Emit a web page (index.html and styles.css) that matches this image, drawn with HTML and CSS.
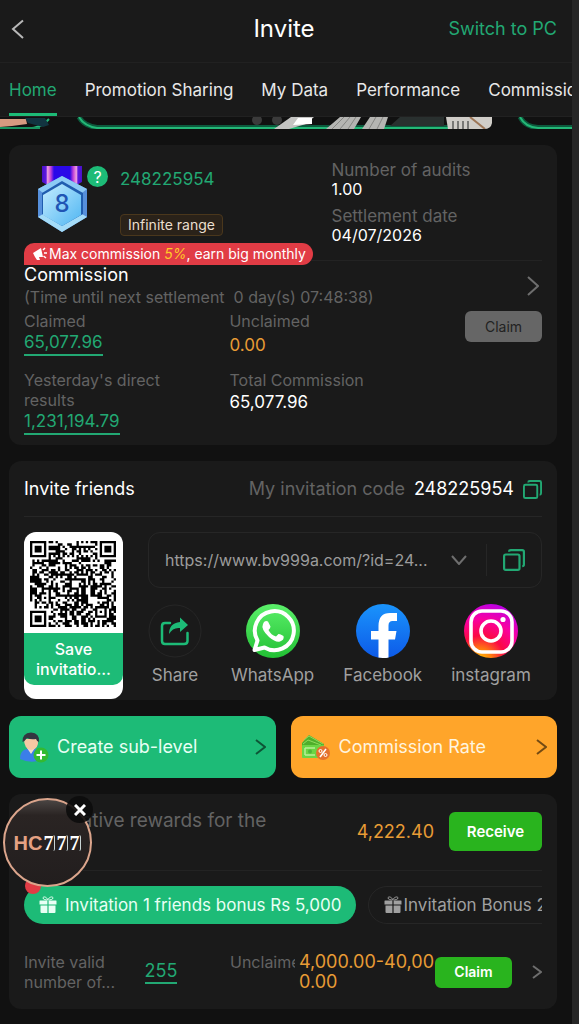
FILE: index.html
```html
<!DOCTYPE html>
<html lang="en">
<head>
    <meta charset="UTF-8">
    <meta name="viewport" content="width=device-width, initial-scale=1.0">
    <title>Invite</title>
    <link rel="stylesheet" href="styles.css">
</head>
<body>
    <svg class="defs" width="0" height="0" aria-hidden="true">
        <defs>
            <linearGradient id="ribbon">
                <stop offset="0" stop-color="#4a10c8"/><stop offset=".1" stop-color="#5a18e0"/>
                <stop offset=".14" stop-color="#f0a0e0"/><stop offset=".22" stop-color="#c040d8"/>
                <stop offset=".3" stop-color="#2a08e8"/><stop offset=".7" stop-color="#2a08e8"/>
                <stop offset=".78" stop-color="#c040d8"/><stop offset=".86" stop-color="#f0a0e0"/>
                <stop offset=".9" stop-color="#5a18e0"/><stop offset="1" stop-color="#4a10c8"/>
            </linearGradient>
            <linearGradient id="gem" x1="0" y1="0" x2="1" y2="1"><stop offset="0" stop-color="#c4ecff"/><stop offset="1" stop-color="#4fb6f2"/></linearGradient>
            <linearGradient id="waBg" x1="0" y1="0" x2="0" y2="1"><stop offset="0" stop-color="#5bf06a"/><stop offset="1" stop-color="#22c034"/></linearGradient>
            <linearGradient id="fbBg" x1="0" y1="0" x2="0" y2="1"><stop offset="0" stop-color="#1a94fc"/><stop offset="1" stop-color="#0d5ae8"/></linearGradient>
            <radialGradient id="igBg" cx=".3" cy="1.05" r="1.1">
                <stop offset="0" stop-color="#ffc800"/><stop offset=".2" stop-color="#ff7a10"/>
                <stop offset=".42" stop-color="#fb0a44"/><stop offset=".7" stop-color="#fa00a0"/><stop offset="1" stop-color="#b800e8"/>
            </radialGradient>
            <symbol id="copy" viewBox="0 0 20 20">
                <rect x="1" y="5" width="14" height="14" rx="1.5"/>
                <path d="M5.5 2.5Q5.500 1 7 1H17.500Q19 1 19 2.500V14Q19 15.500 17.500 15.500"/>
            </symbol>
            <symbol id="gift" viewBox="0 0 18 18">
                <path d="M1 4.500H8.400V8.500H.500V5Q.500 4.500 1 4.500ZM9.600 4.500H17Q17.500 4.500 17.500 5V8.500H9.600ZM1.500 9.500H8.400V17H2.500Q1.500 17 1.500 16ZM9.600 9.500H16.500V16Q16.500 17 15.500 17H9.600Z" fill="currentColor"/>
                <path d="M8.500 4C7 4 4 3.500 4 2C4 .300 7.500 .500 8.800 3.800C10.500 .500 14 .300 14 2C14 3.500 11 4 9.500 4" fill="none" stroke="currentColor"/>
            </symbol>
        </defs>
    </svg>

    <div class="app">
        <header class="topbar">
            <a class="back" href="#" aria-label="Back"><svg width="14" height="22" viewBox="0 0 14 22"><path d="M12 2.500L2 11L12 20"/></svg></a>
            <h1>Invite</h1>
            <a class="switch" href="#">Switch to PC</a>
        </header>
        <nav class="tabs">
            <a class="active" href="#">Home</a>
            <a href="#">Promotion Sharing</a>
            <a href="#">My Data</a>
            <a href="#">Performance</a>
            <a href="#">Commission</a>
        </nav>
        <div class="banners">
            <svg class="banner-art" viewBox="0 0 572 12" preserveAspectRatio="none" aria-hidden="true">
                <path d="M28 11.500C37 11.500 43 9 49 2" fill="none" stroke="#22b97a" stroke-width="2"/>
                <path d="M0 2L26 2L27 7L12 9L0 10Z" fill="#d79a80"/>
                <path d="M25 1H45L49 8L43 10L28 6Z" fill="#123440"/>
                <path d="M0 11H40" stroke="#18935f" stroke-width="2"/>
                <path d="M79 0Q84 9 97 10.500H474" fill="none" stroke="#0c5a3d" stroke-width="5"/>
                <path d="M79 0Q84 9 97 11H474" fill="none" stroke="#24b877" stroke-width="2"/>
                <circle cx="257" cy="3" r="5" fill="#3b3b3b"/><circle cx="277" cy="3" r="5" fill="#3b3b3b"/>
                <path d="M274 12L291 0H314L306 7L289 12Z" fill="#c4c4c2"/>
                <path d="M293 8L298 1H312V7Z" fill="#fff"/>
                <path d="M326 12L340 0H361L354 12ZM362 12L370 0H388L384 12Z" fill="#b5b5b2"/>
                <path d="M332 12L344 0M340 12L350 0M348 12L356 0M369 12L376 0M377 12L383 0" stroke="#858582"/>
                <path d="M400 0H444V9H390Z" fill="#29302f"/>
                <path d="M446 0H492V6Q491 12 484 12H448Z" fill="#d0cdc8"/>
                <path d="M453 4V12M458 4V12M463 4V12M468 4V12" stroke="#787875" stroke-width="2"/>
                <path d="M470 0L485 12" stroke="#9d7657" stroke-width="2"/>
                <path d="M520 0Q525 10 538 10.500H572" fill="none" stroke="#0c5a3d" stroke-width="5"/>
                <path d="M520 0Q525 10 538 11H572" fill="none" stroke="#24b877" stroke-width="2"/>
            </svg>
        </div>

        <main>
            <section class="card account">
                <div class="profile">
                    <div class="medal">
                        <svg width="52" height="68" viewBox="0 0 52 68" role="img" aria-label="Level 8">
                            <path d="M5 1H45V17L25 28L5 17Z" fill="url(#ribbon)"/>
                            <path d="M25 11L50 24V52L25 67L1 52V24Z" fill="#5690dc"/>
                            <path d="M25 11L50 24L45 28L25 17L6 28L1 24Z" fill="#8ccaf5"/>
                            <path d="M1 52L6 49L25 60L45 49L50 52L25 67Z" fill="#a4dcf8"/>
                            <path d="M25 16L46 28V49L25 61L5 49V28Z" fill="#205daf"/>
                            <path d="M25 19L44 30V50L25 61L6 50V30Z" fill="url(#gem)"/>
                            <text x="25" y="47" text-anchor="middle">8</text>
                        </svg>
                        <button class="help" aria-label="Help">?</button>
                    </div>
                    <div class="member">
                        <div class="member-id">248225954</div>
                        <span class="range">Infinite range</span>
                    </div>
                    <dl class="audit">
                        <dt>Number of audits</dt>
                        <dd>1.00</dd>
                        <dt>Settlement date</dt>
                        <dd>04/07/2026</dd>
                    </dl>
                    <div class="promo">
                        <svg width="15" height="14" viewBox="0 0 15 14" aria-hidden="true">
                            <path d="M1 6L9 1L11 10L3 10ZM3 10L7 10L8 13H5Z" fill="#fff"/>
                            <path d="M11 3L13 1M12 6H15M11.500 9L14 11" stroke="#fff" stroke-width="1.500"/>
                        </svg>
                        <span>Max commission <em>5%</em>, earn big monthly</span>
                    </div>
                </div>

                <div class="commission-head">
                    <div>
                        <h2>Commission</h2>
                        <p>(Time until next settlement&nbsp; 0 day(s) 07:48:38)</p>
                    </div>
                    <a href="#" aria-label="Commission details"><svg class="chevron" width="12" height="20" viewBox="0 0 12 20"><path d="M1 1L11 10L1 19"/></svg></a>
                </div>
                <div class="stats">
                    <div class="stat">
                        <span>Claimed</span>
                        <a href="#">65,077.96</a>
                    </div>
                    <div class="stat">
                        <span>Unclaimed</span>
                        <b class="gold">0.00</b>
                    </div>
                    <button class="claim" disabled>Claim</button>
                    <div class="stat">
                        <span>Yesterday's direct results</span>
                        <a href="#">1,231,194.79</a>
                    </div>
                    <div class="stat">
                        <span>Total Commission</span>
                        <b>65,077.96</b>
                    </div>
                </div>
            </section>

            <section class="card friends">
                <div class="friends-head">
                    <h2>Invite friends</h2>
                    <div class="code">
                        <span>My invitation code</span>
                        <b>248225954</b>
                        <button class="icon-btn" aria-label="Copy code"><svg class="copy" width="19" height="19"><use href="#copy"/></svg></button>
                    </div>
                </div>
                <div class="friends-body">
                    <div class="qr-card">
                        <svg id="qr" viewBox="0 0 37 37" role="img" aria-label="Invitation QR code"><path d=""/></svg>
                        <button class="save">Save invitatio...</button>
                    </div>
                    <div class="share-panel">
                        <div class="link-box">
                            <select aria-label="Invitation link">
                                <option>https://www.bv999a.com/?id=24...</option>
                            </select>
                            <svg class="chevron" width="16" height="10" viewBox="0 0 16 10" aria-hidden="true"><path d="M1 1L8 9L15 1"/></svg>
                            <button class="icon-btn" aria-label="Copy link"><svg class="copy" width="22" height="22"><use href="#copy"/></svg></button>
                        </div>
                        <div class="socials">
                            <a href="#">
                                <svg width="54" height="54" viewBox="0 0 54 54">
                                    <circle cx="27" cy="27" r="26" fill="none" stroke="#262626"/>
                                    <path d="M22 19H17Q14 19 14 22V37Q14 40 17 40H36Q39.500 40 39.500 37V29" fill="none" stroke="#1dbb77" stroke-width="2.500" stroke-linecap="round"/>
                                    <path d="M32 13.500L40 21L32 28V24Q25 23 21 30Q21 19 32 18Z" fill="#1dbb77"/>
                                </svg>
                                Share
                            </a>
                            <a href="#">
                                <svg width="54" height="54" viewBox="0 0 54 54">
                                    <circle cx="27" cy="27" r="27" fill="url(#waBg)"/>
                                    <path d="M8.500 46L11.500 36.500A19.500 19.500 0 1 1 18.500 43.500Z" fill="none" stroke="#fff" stroke-width="4" stroke-linejoin="round"/>
                                    <path d="M18 18Q20 16.500 22 17.500L24.500 22.500Q24.500 24 22.500 26Q25 31 30 32.500L32.500 30Q33.500 29.500 37.500 32Q38.500 36 34 37.500Q30 39 23 33Q14.500 25 17 20Z" fill="#fff"/>
                                </svg>
                                WhatsApp
                            </a>
                            <a href="#">
                                <svg width="54" height="54" viewBox="0 0 54 54">
                                    <circle cx="27" cy="27" r="27" fill="url(#fbBg)"/>
                                    <path d="M22.500 53.600V35.500H15V27H22.500V22Q22.500 9 34 9H41V17H36.500Q32.500 17 32.500 21.500V27H40.500L39 35.500H32.500V53.400Q28 54.500 22.500 53.600Z" fill="#fff"/>
                                </svg>
                                Facebook
                            </a>
                            <a href="#">
                                <svg width="54" height="54" viewBox="0 0 54 54">
                                    <circle cx="27" cy="27" r="27" fill="url(#igBg)"/>
                                    <g fill="none" stroke="#fff" stroke-width="3.600">
                                        <rect x="7" y="7" width="41" height="41" rx="11"/>
                                        <circle cx="27" cy="27" r="10"/>
                                    </g>
                                    <circle cx="39" cy="15.500" r="2.600" fill="#fff"/>
                                </svg>
                                instagram
                            </a>
                        </div>
                    </div>
                </div>
            </section>

            <div class="actions">
                <button class="action green">
                    <svg width="30" height="32" viewBox="0 0 30 32" aria-hidden="true">
                        <path d="M1 28Q1 19 8 18H17Q24 19 22 29Q12 33 1 28Z" fill="#3b7ee8"/>
                        <path d="M8 17H16L12 23Z" fill="#f1dccd"/>
                        <path d="M5 8H19Q20 19 12 19Q5 18 5 8Z" fill="#f6c8a4"/>
                        <path d="M3.500 11Q3 2 12 1.500Q21 2 20 11Q18 11 17 8Q12 9 8 7Q6 10 3.500 11Z" fill="#333540"/>
                        <circle cx="22" cy="24" r="7.500" fill="#33ba31"/>
                        <path d="M22 19.500V28.500M17.500 24H26.500" stroke="#fff" stroke-width="2"/>
                    </svg>
                    <span>Create sub-level</span>
                    <svg class="chevron" width="11" height="16" viewBox="0 0 11 16"><path d="M1 1L10 8L1 15"/></svg>
                </button>
                <button class="action orange">
                    <svg width="30" height="32" viewBox="0 0 30 32" aria-hidden="true">
                        <path d="M1 12L8 4L23 13L21 20H1Z" fill="#4fae2b"/>
                        <path d="M3 9L8 5L22 13M2 13L7 9L20 14" stroke="#8fdb5c" fill="none"/>
                        <rect x="1" y="14" width="22" height="13" rx="1" fill="#6bd544"/>
                        <path d="M4 17H14M4 24H14M4 17V24" stroke="#b9ee98" stroke-width="1.500" fill="none"/>
                        <circle cx="9" cy="20.500" r="2" fill="#4db53a"/>
                        <circle cx="22" cy="22" r="7" fill="#e5702b"/>
                        <path d="M25 18L19 26" stroke="#fff" stroke-width="1.500"/>
                        <circle cx="19.500" cy="20" r="1.500" fill="none" stroke="#fff"/><circle cx="24.500" cy="24" r="1.500" fill="none" stroke="#fff"/>
                    </svg>
                    <span>Commission Rate</span>
                    <svg class="chevron" width="11" height="16" viewBox="0 0 11 16"><path d="M1 1L10 8L1 15"/></svg>
                </button>
            </div>

            <section class="card rewards">
                <div class="rewards-head">
                    <h2>Cumulative rewards for the</h2>
                    <b class="gold">4,222.40</b>
                    <button class="receive">Receive</button>
                </div>
                <div class="bonus-tabs">
                    <button class="bonus active"><svg width="18" height="18"><use href="#gift"/></svg>Invitation 1 friends bonus Rs 5,000</button>
                    <button class="bonus"><svg width="18" height="18"><use href="#gift"/></svg>Invitation Bonus 2</button>
                </div>
                <div class="bonus-row">
                    <span class="valid">Invite valid number of...</span>
                    <a class="count" href="#">255</a>
                    <span class="unclaimed">Unclaimed</span>
                    <b class="gold">4,000.00-40,000.00</b>
                    <button class="claim live">Claim</button>
                    <a class="more" href="#" aria-label="Bonus details"><svg class="chevron" width="10" height="14" viewBox="0 0 10 14"><path d="M1 1L9 7L1 13"/></svg></a>
                </div>
                <i class="dot"></i>
                <div class="floating">
                    <a href="#"><span class="hc">HC</span><span class="reel">7</span><span class="reel">7</span><span class="reel">7</span></a>
                    <button aria-label="Close"><svg width="12" height="12" viewBox="0 0 12 12"><path d="M1 1L11 11M11 1L1 11"/></svg></button>
                </div>
            </section>
        </main>
    </div>
    <script src="qr.js"></script>
</body>
</html>
```
FILE: styles.css
```css
* {
    box-sizing: border-box;
}
body {
    margin: 0;
    background-color: #262626;
    color: #ffffff;
    font-family: Inter, "Liberation Sans", sans-serif;
    font-size: 16px;
    line-height: 20px;
}
h1, h2, p, dl, dd {
    margin: 0;
    font-weight: 400;
}
b {
    font-weight: 400;
}
a {
    color: inherit;
    text-decoration: none;
}
button, select {
    padding: 0;
    border: none;
    background: none;
    color: inherit;
    font: inherit;
    cursor: pointer;
}
svg {
    display: block;
    flex: none;
}
.defs {
    position: absolute;
}
.app {
    min-height: 100vh;
    margin-right: 7px;
    padding-bottom: 15px;
    background-color: #111111;
    overflow: hidden;
}
.gold {
    color: #e89c35;
}
.chevron {
    fill: none;
    stroke: #6e6e6e;
    stroke-width: 2;
}

/* header */
.topbar {
    display: grid;
    grid-template-columns: 1fr auto 1fr;
    align-items: center;
    height: 63px;
    padding: 0 15px 4px 11px;
    background-color: #1a1a1a;
    border-bottom: 1px solid #212121;
}
.back svg {
    fill: none;
    stroke: #b8b8b8;
    stroke-width: 2;
}
.topbar h1 {
    font-size: 24px;
    line-height: 30px;
}
.switch {
    justify-self: end;
    color: #22a873;
    font-size: 18px;
}
.tabs {
    display: flex;
    gap: 28px;
    height: 54px;
    padding-left: 9px;
    background-color: #1a1a1a;
    border-bottom: 1px solid #212121;
    overflow: hidden;
    white-space: nowrap;
}
.tabs a {
    padding-top: 17px;
    font-size: 17px;
    color: #e8e8e8;
}
.tabs .active {
    color: #22a873;
    border-bottom: 3px solid #1dbb77;
}
.banner-art {
    width: 100%;
    height: 12px;
}

main {
    display: flex;
    flex-direction: column;
    gap: 16px;
    padding: 16px 15px 0 9px;
}
.card {
    position: relative;
    padding: 15px;
    background-color: #1a1a1a;
    border-radius: 12px;
}

/* account */
.account {
    padding-bottom: 10px;
}
.profile {
    position: relative;
    display: grid;
    grid-template-columns: 96px 211fr 210fr;
    height: 101px;
    border-bottom: 1px solid #232323;
}
.medal {
    display: flex;
    align-items: flex-start;
    padding: 5px 0 0 13px;
}
.medal text {
    fill: #2055b4;
    font-size: 24px;
    font-weight: 500;
}
.help {
    flex: none;
    width: 21px;
    height: 21px;
    margin: 1px 0 0 -2px;
    border-radius: 50%;
    background-color: #1dbb77;
    font-size: 16px;
}
.member {
    display: flex;
    flex-direction: column;
    align-items: flex-start;
    gap: 25px;
    padding-top: 9px;
}
.member-id {
    color: #22a873;
    font-size: 17px;
}
.range {
    padding: 0 7px;
    border: 1px solid #4a371c;
    border-radius: 4px;
    background-color: #2a2219;
    font-size: 14px;
    color: #eadfce;
}
.audit dt {
    font-size: 17px;
    color: #636363;
}
.audit dd {
    height: 26px;
    line-height: 18px;
}
.promo {
    position: absolute;
    left: 0;
    bottom: -5px;
    display: flex;
    align-items: center;
    gap: 2px;
    height: 22px;
    padding: 0 7px 0 8px;
    border-radius: 10px 11px 11px 0;
    background-color: #e13c45;
    font-size: 14px;
    white-space: nowrap;
}
.promo em {
    color: #ffc928;
}
.commission-head {
    display: flex;
    justify-content: space-between;
    align-items: center;
    padding: 4px 3px 4px 0;
}
.commission-head h2 {
    font-size: 18px;
}
.commission-head p {
    padding-top: 2px;
    font-size: 16px;
    color: #636363;
}
.stats {
    display: grid;
    grid-template-columns: 205fr 235fr 77px;
    row-gap: 14px;
}
.stat {
    display: flex;
    flex-direction: column;
    align-items: flex-start;
    padding-right: 40px;
    color: #636363;
}
.stat a {
    border-bottom: 2px solid #22a873;
    color: #22a873;
    font-size: 17px;
    line-height: 23px;
}
.stat b {
    padding-top: 2px;
    font-size: 17px;
    color: #ffffff;
}
.stat .gold {
    padding-top: 4px;
    color: #e89c35;
}
.claim {
    width: 77px;
    height: 31px;
    border-radius: 6px;
    font-size: 14px;
}
.claim:disabled {
    background-color: #666666;
    color: #222222;
}

/* invite friends */
.friends {
    padding-bottom: 1px;
}
.friends-head {
    display: flex;
    justify-content: space-between;
    align-items: center;
    height: 41px;
    padding-bottom: 14px;
    border-bottom: 1px solid #262626;
}
.friends-head h2 {
    font-size: 18px;
}
.code {
    display: flex;
    align-items: center;
    gap: 9px;
    font-size: 18px;
}
.code span {
    color: #636363;
}
.copy {
    fill: none;
    stroke: #22a873;
    stroke-width: 2;
}
.friends-body {
    display: flex;
    gap: 25px;
    padding-top: 15px;
}
.qr-card {
    flex: none;
    width: 99px;
    height: 167px;
    border-radius: 12px;
    background-color: #ffffff;
}
#qr {
    width: 86px;
    height: 86px;
    margin: 9px 6px 6px;
}
.save {
    width: 100%;
    height: 52px;
    border-radius: 0 0 10px 10px;
    background-color: #1dbb77;
    font-weight: 500;
}
.share-panel {
    flex: 1;
    min-width: 0;
}
.link-box {
    display: flex;
    align-items: center;
    height: 56px;
    padding: 0 16px;
    border: 1px solid #262626;
    border-radius: 12px;
}
.link-box select {
    appearance: none;
    flex: 1;
    min-width: 0;
    color: #9c9c9c;
    font-size: 16px;
}
.link-box .chevron {
    margin: 0 19px 0 4px;
}
.link-box .icon-btn {
    padding: 5px 0 5px 16px;
    border-left: 1px solid #262626;
}
.socials {
    display: flex;
    gap: 29px;
    padding-top: 16px;
}
.socials a {
    display: flex;
    flex-direction: column;
    align-items: center;
    gap: 7px;
    color: #a0a0a0;
    font-size: 17px;
}

.actions {
    display: grid;
    grid-template-columns: 1fr 1fr;
    gap: 15px;
}
.action {
    display: flex;
    align-items: center;
    gap: 8px;
    height: 62px;
    padding: 0 10px;
    border-radius: 12px;
    font-size: 18px;
    color: #e8fff4;
}
.action span {
    flex: 1;
    text-align: left;
}
.action .chevron {
    stroke: rgba(0, 0, 0, 0.55);
}
.green {
    background-color: #1dbb77;
}
.orange {
    background-color: #ffa52a;
    color: #fff4df;
}

/* rewards */
.rewards-head {
    display: flex;
    align-items: center;
    height: 62px;
    border-bottom: 1px solid #232323;
    padding-bottom: 16px;
    font-size: 18px;
}
.rewards-head h2 {
    flex: 1;
    padding-bottom: 22px;
    font-size: 19px;
    color: #636363;
}
.receive {
    width: 93px;
    height: 39px;
    margin-left: 15px;
    border-radius: 6px;
    background-color: #29b41e;
    font-size: 15px;
    font-weight: 600;
}
.bonus-tabs {
    display: flex;
    gap: 12px;
    padding-top: 15px;
    overflow: hidden;
}
.bonus {
    display: flex;
    flex: none;
    align-items: center;
    gap: 1px;
    height: 38px;
    padding: 0 15px;
    border: 1px solid #262626;
    border-radius: 19px;
    font-size: 17px;
    color: #a0a0a0;
}
.bonus.active {
    gap: 8px;
    border: none;
    background-color: #1dbb77;
    color: #e8fff4;
}
.bonus-row {
    display: grid;
    grid-template-columns: 120fr 85fr 65px 140px 78px 29px;
    align-items: center;
    padding: 28px 0 2px;
}
.bonus-row .valid {
    color: #636363;
}
.count {
    justify-self: start;
    border-bottom: 2px solid #22a873;
    color: #22a873;
    font-size: 18px;
    line-height: 22px;
}
.unclaimed {
    align-self: start;
    overflow: hidden;
    color: #636363;
}
.bonus-row .gold {
    padding-left: 4px;
    font-size: 18px;
    word-break: break-all;
}
.more {
    justify-self: end;
}
.live {
    background-color: #29b41e;
    font-weight: 600;
}
.dot {
    position: absolute;
    left: 16px;
    top: 84px;
    width: 16px;
    height: 16px;
    border-radius: 50%;
    background-color: #e13c45;
}
.floating {
    position: absolute;
    left: -6px;
    top: 4px;
}
.floating a {
    display: flex;
    justify-content: center;
    align-items: center;
    width: 89px;
    height: 89px;
    border: 2px solid #dba58c;
    border-radius: 50%;
    background: linear-gradient(#4a4543, #2a2423 18%, #221e1e);
}
.hc {
    color: #e4a183;
    font-family: "Liberation Sans", sans-serif;
    font-size: 20px;
    font-weight: 700;
}
.reel {
    padding: 0 1px;
    border-right: 1px solid #c8d4d4;
    border-radius: 2px;
    font-family: "Liberation Serif", serif;
    font-size: 20px;
    font-weight: 700;
    line-height: 16px;
}
.floating button {
    position: absolute;
    left: 63px;
    top: -2px;
    display: grid;
    place-items: center;
    width: 27px;
    height: 27px;
    border-radius: 50%;
    background-color: rgba(12, 12, 12, 0.9);
}
.floating button path {
    stroke: #ffffff;
    stroke-width: 3;
}
```
FILE: qr.js
```js
const SIZE = 37;

function ring(x, y, cx, cy, radius) {
    const d = Math.max(Math.abs(x - cx), Math.abs(y - cy));
    return d > radius ? null : d;
}

function isDark(x, y, noise) {
    for (const [cx, cy] of [[3, 3], [SIZE - 4, 3], [3, SIZE - 4]]) {
        const d = ring(x, y, cx, cy, 4);
        if (d !== null) return d < 2 || d === 3;
    }
    const d = ring(x, y, SIZE - 7, SIZE - 7, 2);
    if (d !== null) return d !== 1;
    if (x === 6) return y % 2 === 0;
    if (y === 6) return x % 2 === 0;
    return noise > 0.45;
}

let seed = 24822;
let path = "";
for (let y = 0; y < SIZE; y++) {
    for (let x = 0; x < SIZE; x++) {
        seed = (seed * 16807) % 2147483647;
        if (isDark(x, y, seed / 2147483647)) path += `M${x} ${y}h1v1h-1z`;
    }
}
document.querySelector("#qr path").setAttribute("d", path);
```
